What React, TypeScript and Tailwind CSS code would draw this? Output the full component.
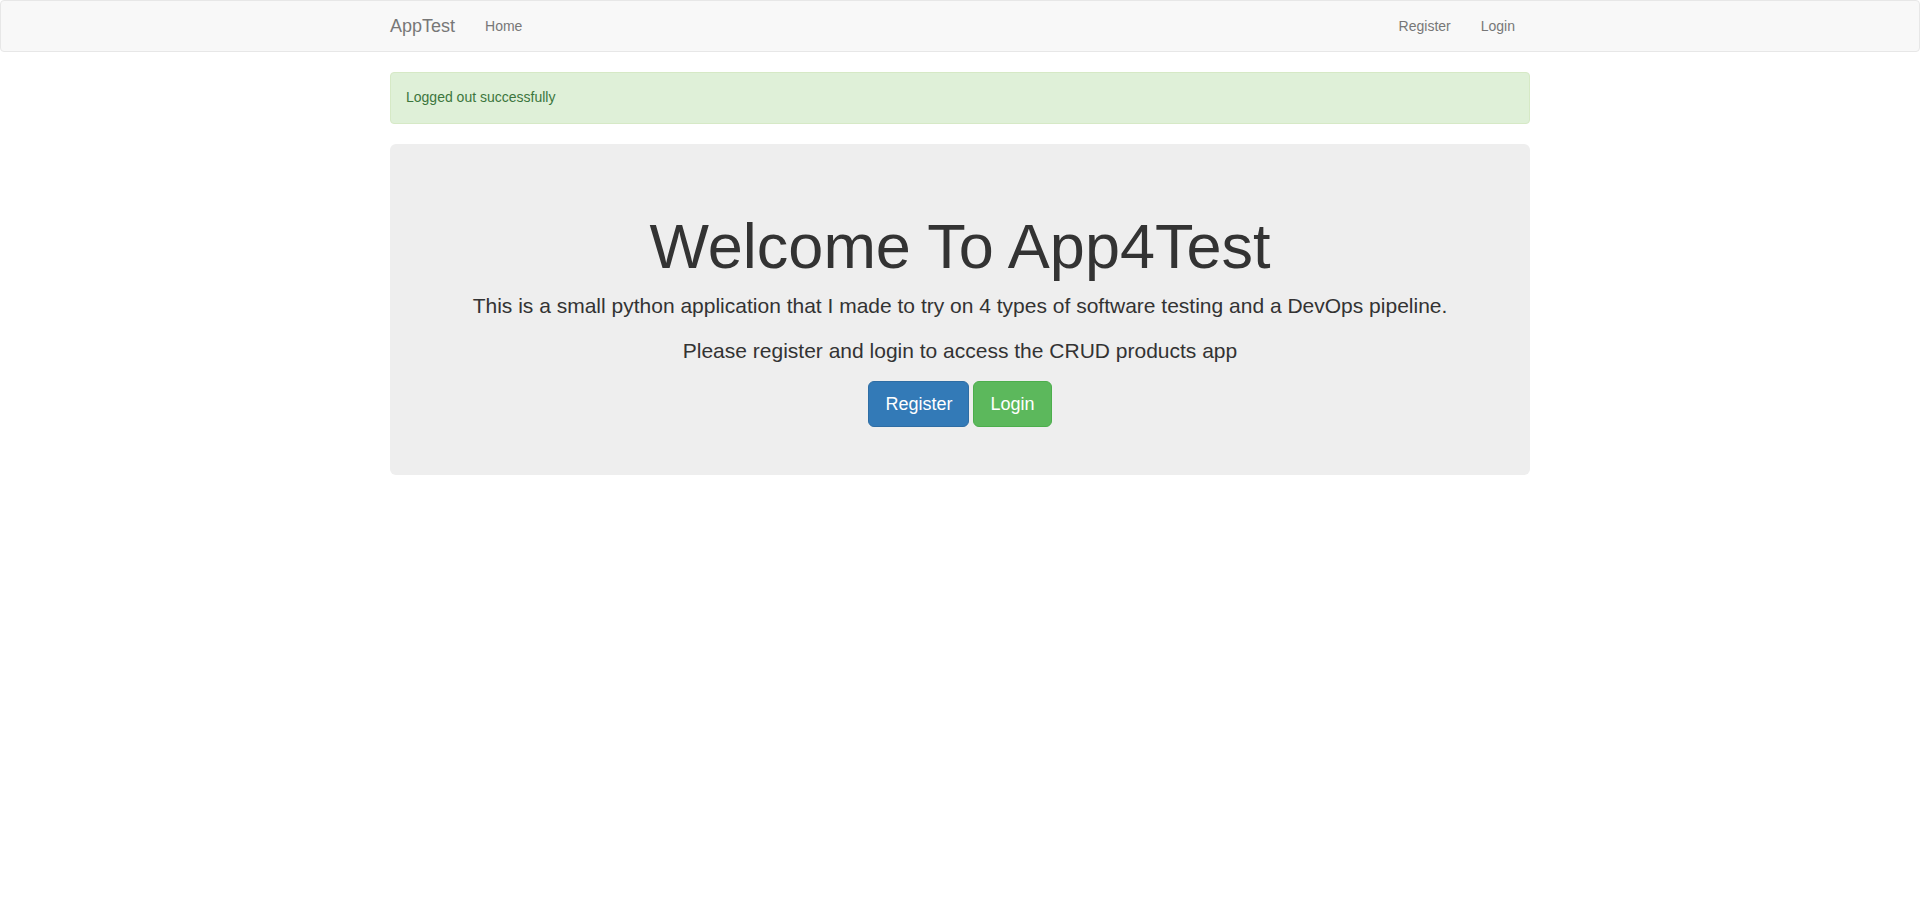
export default function App() {
  const font = { fontFamily: '"Liberation Sans", Arial, Helvetica, sans-serif' };
  return (
    <div style={font} className="min-h-[924px] bg-white text-[14px] leading-[1.42857] text-[#333]">
      <nav className="mb-5 min-h-[50px] rounded border border-[#e7e7e7] bg-[#f8f8f8]">
        <div className="mx-auto flex w-[1170px] items-center justify-between px-[15px]">
          <div className="-ml-[15px] flex items-center">
            <a className="block h-[50px] px-[15px] py-[15px] text-[18px] leading-[20px] text-[#777]">AppTest</a>
            <a className="block px-[15px] py-[15px] leading-[20px] text-[#777]">Home</a>
          </div>
          <div className="flex items-center">
            <a className="block px-[15px] py-[15px] leading-[20px] text-[#777]">Register</a>
            <a className="block px-[15px] py-[15px] leading-[20px] text-[#777]">Login</a>
          </div>
        </div>
      </nav>
      <div className="mx-auto w-[1170px] px-[15px]">
        <div className="mb-5 rounded border border-[#d6e9c6] bg-[#dff0d8] p-[15px] text-[#3c763d]">
          Logged out successfully
        </div>
        <div className="mb-[30px] rounded-[6px] bg-[#eee] px-[60px] py-12 text-center">
          <h1 className="mt-5 mb-[10px] text-[63px] leading-[1.1] font-medium text-[#333]">Welcome To App4Test</h1>
          <p className="mb-[15px] text-[21px] leading-[30px]">
            This is a small python application that I made to try on 4 types of software testing and a DevOps pipeline.
          </p>
          <p className="mb-[15px] text-[21px] leading-[30px]">Please register and login to access the CRUD products app</p>
          <div className="flex justify-center gap-1">
            <a className="inline-block rounded-[6px] border border-[#2e6da4] bg-[#337ab7] px-4 py-[10px] text-[18px] leading-[24px] text-white">
              Register
            </a>
            <a className="inline-block rounded-[6px] border border-[#4cae4c] bg-[#5cb85c] px-4 py-[10px] text-[18px] leading-[24px] text-white">
              Login
            </a>
          </div>
        </div>
      </div>
    </div>
  );
}
